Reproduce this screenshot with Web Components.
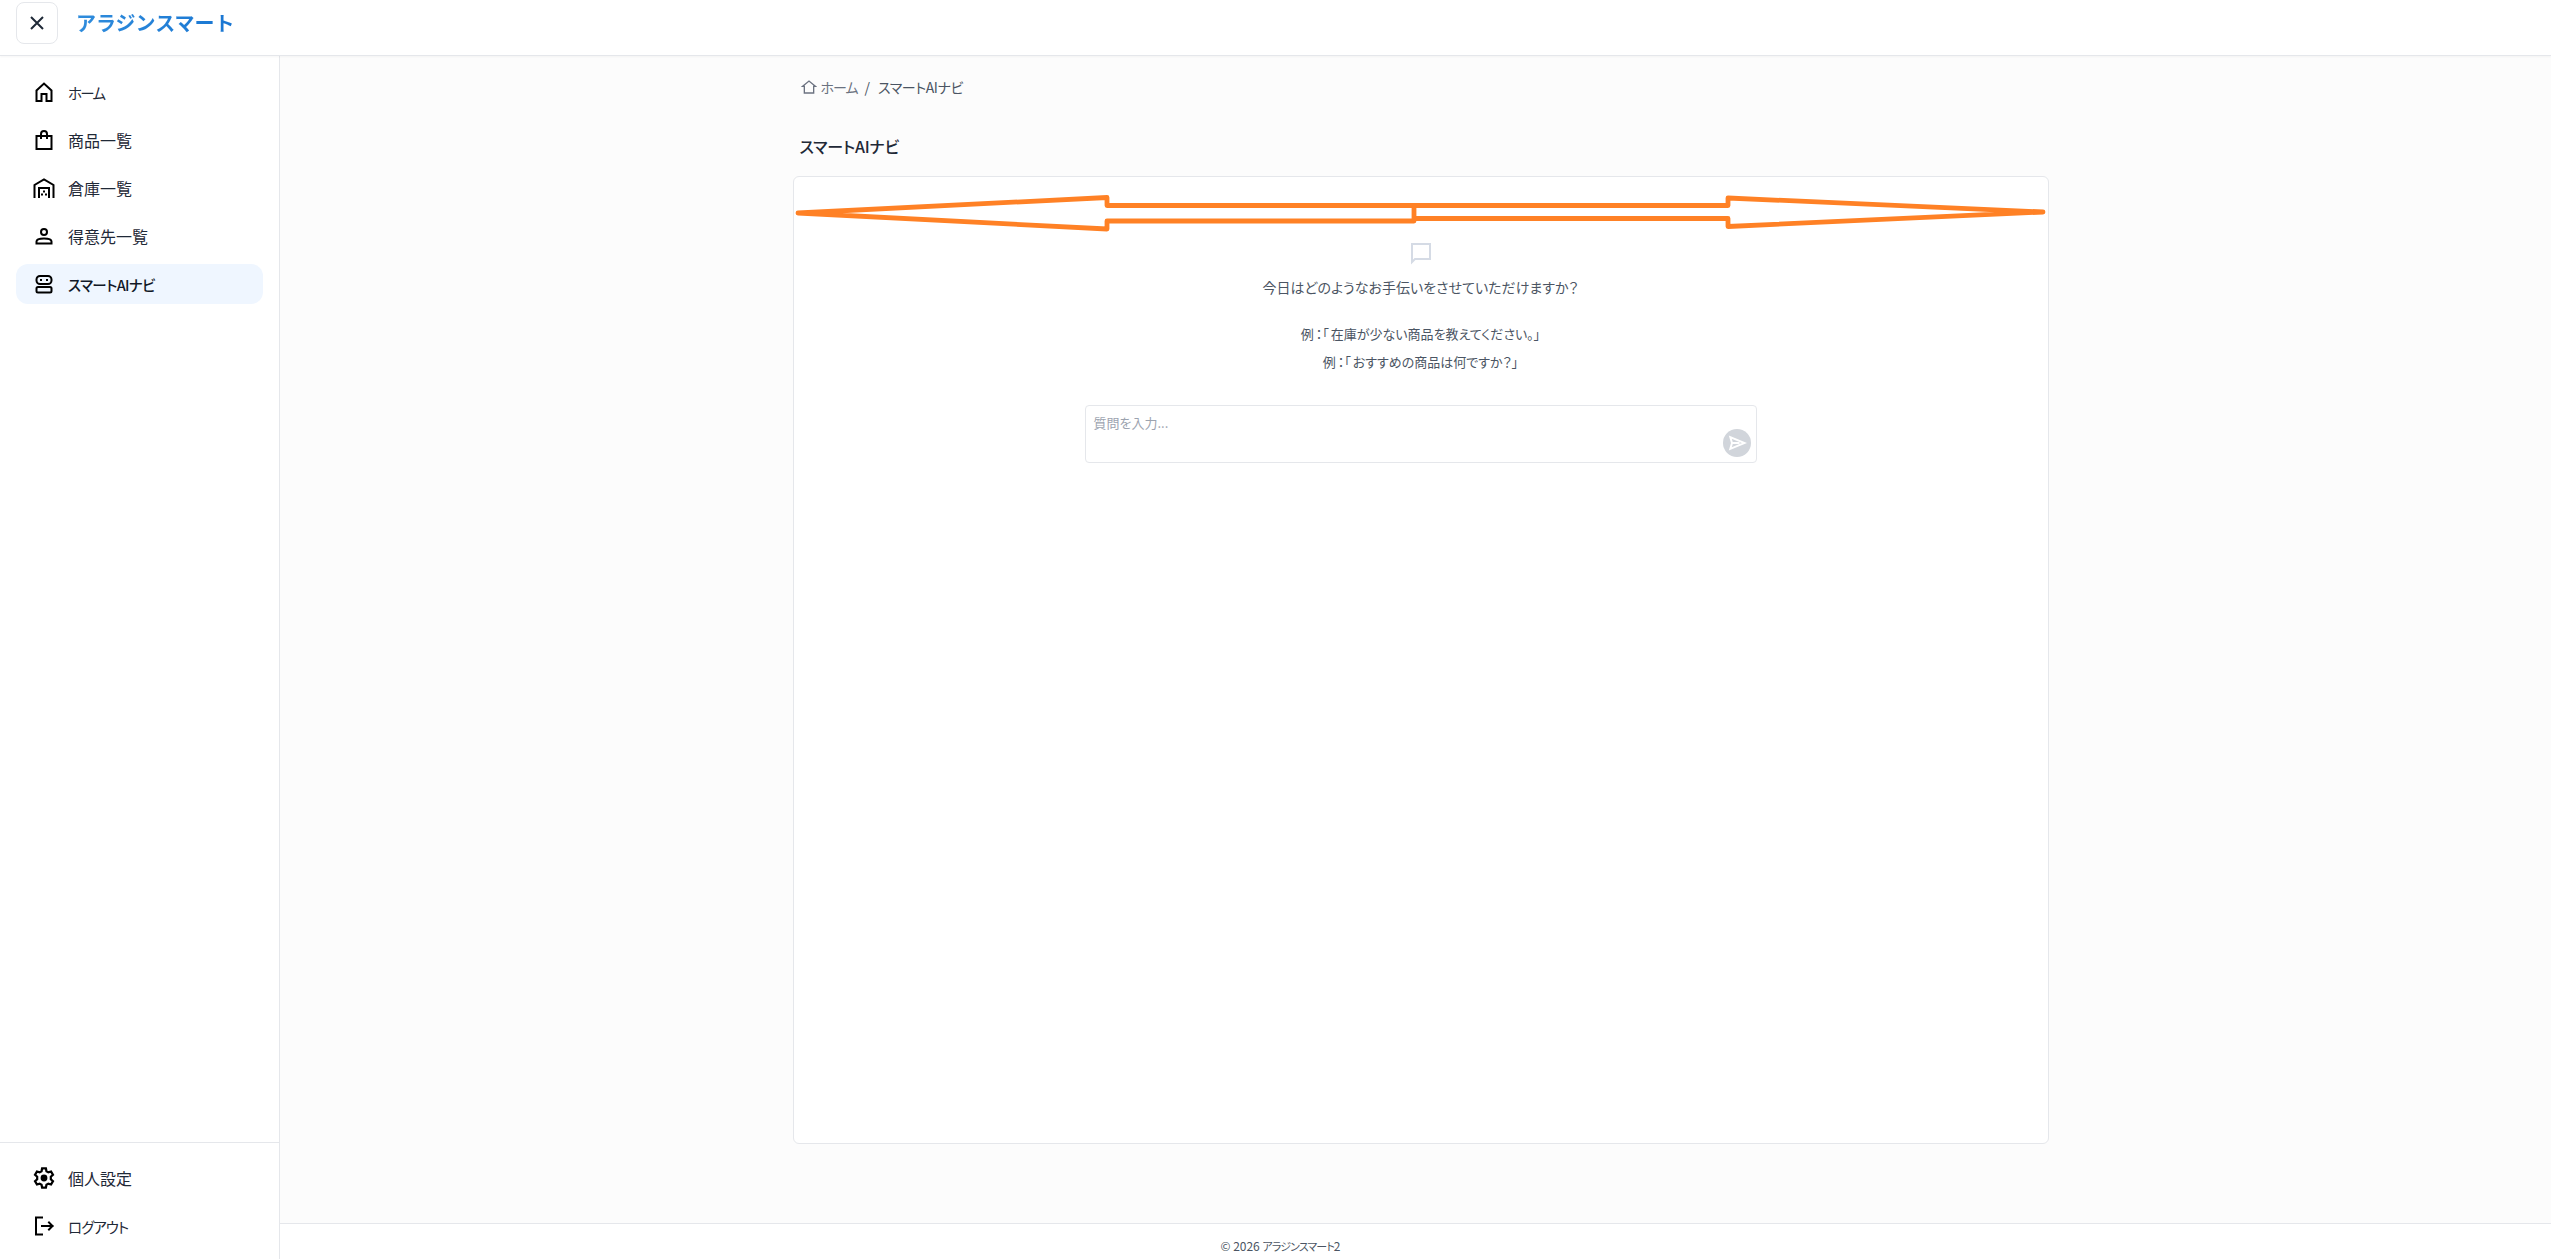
<!DOCTYPE html>
<html lang="ja">
<head>
<meta charset="utf-8">
<title>スマートAIナビ</title>
<style>
  html, body { margin: 0; height: 100%; overflow: hidden; }
  body { font-family: "Noto Sans CJK JP", "Noto Sans", sans-serif; color: #1f2937; }
  .wide { margin: 0 2px; }
  .foot-kana { font-size: 11px; letter-spacing: -.9px; }
</style>
</head>
<body>
<app-shell>
  <app-header slot="header" brand="アラジンスマート"></app-header>
  <side-nav slot="nav">
    <nav-item icon="home" style="font-size:14.500px;letter-spacing:-1.700px">ホーム</nav-item>
    <nav-item icon="bag">商品一覧</nav-item>
    <nav-item icon="warehouse">倉庫一覧</nav-item>
    <nav-item icon="person">得意先一覧</nav-item>
    <nav-item icon="robot" active style="font-size:14.500px;letter-spacing:-.6px">スマートAIナビ</nav-item>
    <nav-item slot="bottom" icon="gear">個人設定</nav-item>
    <nav-item slot="bottom" icon="logout" style="font-size:14.500px;letter-spacing:-1px">ログアウト</nav-item>
  </side-nav>
  <bread-crumb>スマートAIナビ</bread-crumb>
  <page-title>スマートAIナビ</page-title>
  <chat-card>
    <span slot="lead">今日はどのようなお手伝いをさせていただけますか？</span>
    <span slot="example">例<span class="wide">：「</span>在庫が少ない商品を教えてください。」</span>
    <span slot="example">例<span class="wide">：「</span>おすすめの商品は何ですか？」</span>
  </chat-card>
  <app-footer slot="footer">© 2026 <span class="foot-kana">アラジンスマート</span>2</app-footer>
</app-shell>

<script>
const ICONS = {
  home: '<path d="M4.500 21V10.500L12 3.500l7.500 7V21h-5v-7h-5v7z"/>',
  bag: '<path d="M4.500 8h15v13h-15z"/><path d="M9 10V6a3 3 0 0 1 6 0v4"/>',
  warehouse: '<path d="M2.500 21V9L12 3.500 21.500 9v12"/><path d="M7 21v-9h10v9"/><path d="M10 18.500h.01M14 18.500h.01M12 15.500h.01"/>',
  person: '<circle cx="12" cy="8" r="3"/><path d="M4.500 19.500v-2c0-2 3.500-3 7.500-3s7.500 1 7.500 3v2z"/>',
  robot: '<rect x="4.500" y="4" width="15" height="8" rx="3.500"/><rect x="4.500" y="15" width="15" height="5.500" rx="1.500"/><path d="M9 8h.01M15 8h.01"/>',
  gear: '<circle cx="12" cy="12" r="2.400" fill="currentColor"/><path transform="translate(12 12) scale(1.12) translate(-12 -12)" d="M10.300 3.500h3.400l.5 2.500 1.700 1 2.400-.8 1.700 3-1.900 1.600v2.400l1.900 1.600-1.700 3-2.400-.8-1.700 1-.5 2.500h-3.400l-.5-2.500-1.700-1-2.400.8-1.700-3 1.900-1.600v-2.400L4 9.200l1.700-3 2.400.8 1.700-1z"/>',
  logout: '<path d="M10 3.500H4v17h6"/><path d="M10 12h10.500M17 8.500l3.500 3.500-3.500 3.500"/>'
};

function svgIcon(name, size, sw) {
  return `<svg width="${size}" height="${size}" viewBox="0 0 24 24" fill="none" stroke="currentColor" stroke-width="${sw}" stroke-linecap="square">${ICONS[name]}</svg>`;
}

class AppShell extends HTMLElement {
  constructor() {
    super();
    this.attachShadow({ mode: 'open' }).innerHTML = `
      <style>
        :host { display: grid; grid-template: 56px 1fr / 280px 1fr; height: 100vh; }
        .head { grid-column: 1 / -1; }
        .side { min-height: 0; display: flex; }
        .right { display: flex; flex-direction: column; min-height: 0; background: #fcfcfc; }
        main { flex: 1; min-height: 0; padding-left: 10px; display: flex; justify-content: center; }
        .col { width: 1256px; display: flex; flex-direction: column; }
      </style>
      <div class="head"><slot name="header"></slot></div>
      <div class="side"><slot name="nav"></slot></div>
      <div class="right">
        <main><div class="col"><slot></slot></div></main>
        <slot name="footer"></slot>
      </div>`;
  }
}

class AppHeader extends HTMLElement {
  constructor() {
    super();
    this.attachShadow({ mode: 'open' }).innerHTML = `
      <style>
        :host { display: flex; align-items: flex-start; height: 56px; box-sizing: border-box; background: #fff;
          border-bottom: 1px solid #e5e7eb; box-shadow: 0 1px 2px rgba(0,0,0,.04); position: relative; z-index: 1; }
        button { margin: 2px 0 0 16px; width: 42px; height: 42px; padding: 0; display: flex; align-items: center; justify-content: center;
          background: #fff; border: 1px solid #e5e7eb; border-radius: 8px; color: #1f2937; }
        b { margin: 7px 0 0 18px; font-size: 20px; line-height: 32px; font-weight: 700;
          background: linear-gradient(90deg, #2f8cdc, #1976d2); -webkit-background-clip: text; background-clip: text; color: transparent; }
      </style>
      <button aria-label="閉じる"><svg width="24" height="24" viewBox="0 0 24 24" fill="none" stroke="currentColor" stroke-width="2"><path d="M6 6l12 12M18 6 6 18"/></svg></button>
      <b></b>`;
    this.shadowRoot.querySelector('b').textContent = this.getAttribute('brand');
  }
}

class SideNav extends HTMLElement {
  constructor() {
    super();
    this.attachShadow({ mode: 'open' }).innerHTML = `
      <style>
        :host { display: flex; flex-direction: column; width: 280px; box-sizing: border-box; background: #fff; border-right: 1px solid #e5e7eb; }
        .top { flex: 1; padding: 16px 16px; display: flex; flex-direction: column; gap: 8px; }
        .bottom { padding: 15px 16px 13px; display: flex; flex-direction: column; gap: 8px; border-top: 1px solid #e5e7eb; }
      </style>
      <nav class="top"><slot></slot></nav>
      <div class="bottom"><slot name="bottom"></slot></div>`;
  }
}

class NavItem extends HTMLElement {
  constructor() {
    super();
    this.attachShadow({ mode: 'open' }).innerHTML = `
      <style>
        :host { display: flex; align-items: center; gap: 12px; height: 40px; width: 247px; padding-left: 16px; box-sizing: border-box;
          border-radius: 12px; font-size: 16px; color: #1f2937; font-feature-settings: "palt"; }
        :host([active]) { background: #eff6ff; color: #111827; font-weight: 500; }
        svg { color: #000; flex: none; }
      </style>
      ${svgIcon(this.getAttribute('icon'), 24, 2)}
      <span><slot></slot></span>`;
  }
}

class BreadCrumb extends HTMLElement {
  constructor() {
    super();
    this.attachShadow({ mode: 'open' }).innerHTML = `
      <style>
        :host { display: flex; align-items: center; height: 20px; margin: 21px 0 0 8px; font-size: 14px; line-height: 20px; color: #4b5563; font-feature-settings: "palt"; }
        svg { color: #6b7280; margin-right: 4px; }
        .home { color: #6b7280; letter-spacing: -1px; }
        .sep { margin: 0 8px 0 7px; }
        .here { letter-spacing: -.4px; }
      </style>
      <svg width="16" height="16" viewBox="0 0 24 24" fill="none" stroke="currentColor" stroke-width="2"><path d="M5 21V11H2.500L12 3l9.500 8H19v10z"/></svg>
      <span class="home">ホーム</span><span class="sep">/</span><span class="here"><slot></slot></span>`;
  }
}

class PageTitle extends HTMLElement {
  constructor() {
    super();
    this.attachShadow({ mode: 'open' }).innerHTML = `
      <style>
        :host { display: block; margin: 37px 0 18px 7px; font-size: 16px; line-height: 24px; font-weight: 500; color: #1f2937; font-feature-settings: "palt"; letter-spacing: -.2px; }
      </style>
      <slot></slot>`;
  }
}

class ChatCard extends HTMLElement {
  constructor() {
    super();
    this.attachShadow({ mode: 'open' }).innerHTML = `
      <style>
        :host { display: flex; flex-direction: column; align-items: center; position: relative; height: 968px; box-sizing: border-box;
          background: #fff; border: 1px solid #e5e7eb; border-radius: 6px; padding-top: 64px; color: #4b5563; font-feature-settings: "palt"; }
        .bubble { color: #d5dbe5; height: 24px; }
        .lead { margin-top: 10px; font-size: 14px; line-height: 24px; }
        .ex { margin-top: 21px; display: flex; flex-direction: column; align-items: center; font-size: 13px; line-height: 28px; }
        .ex ::slotted(span) { display: block; }
        chat-input { margin-top: 29px; }
        .arrow { position: absolute; left: -1px; top: -1px; pointer-events: none; }
      </style>
      <div class="bubble"><svg width="24" height="24" viewBox="0 0 24 24" fill="none" stroke="currentColor" stroke-width="2"><path d="M3 3h18v15H6l-3 3z"/></svg></div>
      <div class="lead"><slot name="lead"></slot></div>
      <div class="ex"><slot name="example"></slot></div>
      <chat-input placeholder="質問を入力..."></chat-input>
      <svg class="arrow" width="1256" height="60" fill="none" stroke="#ff8125" stroke-width="4.800" stroke-linejoin="round">
        <path d="M5 37 314 21.500V29.500H621V45H314V53Z"/>
        <path d="M621 42.500H935V50.500L1250 36 935 22V29.500H621"/>
      </svg>`;
  }
}

class ChatInput extends HTMLElement {
  constructor() {
    super();
    this.attachShadow({ mode: 'open' }).innerHTML = `
      <style>
        :host { display: block; position: relative; width: 672px; height: 58px; box-sizing: border-box; background: #fff;
          border: 1px solid #e5e7eb; border-radius: 4px; padding: 7px 8px; font-size: 13px; line-height: 20px; color: #9ca3af; font-feature-settings: "palt"; }
        .send { position: absolute; right: 5px; bottom: 5px; width: 28px; height: 28px; padding: 0; border: 0; border-radius: 50%;
          background: #d1d5db; color: #fff; display: flex; align-items: center; justify-content: center; }
      </style>
      <div class="ph"></div>
      <button class="send" aria-label="送信"><svg width="20" height="20" viewBox="0 0 24 24" fill="none" stroke="currentColor" stroke-width="2.400"><path d="M4 5 21 12 4 19l2-7zM6 12h9"/></svg></button>`;
    this.shadowRoot.querySelector('.ph').textContent = this.getAttribute('placeholder');
  }
}

class AppFooter extends HTMLElement {
  constructor() {
    super();
    this.attachShadow({ mode: 'open' }).innerHTML = `
      <style>
        :host { display: block; height: 36px; box-sizing: border-box; background: #fff; border-top: 1px solid #e5e7eb; padding: 12px 270px 0 0;
          text-align: center; font-size: 12px; line-height: 20px; color: #4b5563; font-feature-settings: "palt"; }
      </style>
      <slot></slot>`;
  }
}

customElements.define('app-shell', AppShell);
customElements.define('app-header', AppHeader);
customElements.define('side-nav', SideNav);
customElements.define('nav-item', NavItem);
customElements.define('bread-crumb', BreadCrumb);
customElements.define('page-title', PageTitle);
customElements.define('chat-input', ChatInput);
customElements.define('chat-card', ChatCard);
customElements.define('app-footer', AppFooter);
</script>
</body>
</html>
